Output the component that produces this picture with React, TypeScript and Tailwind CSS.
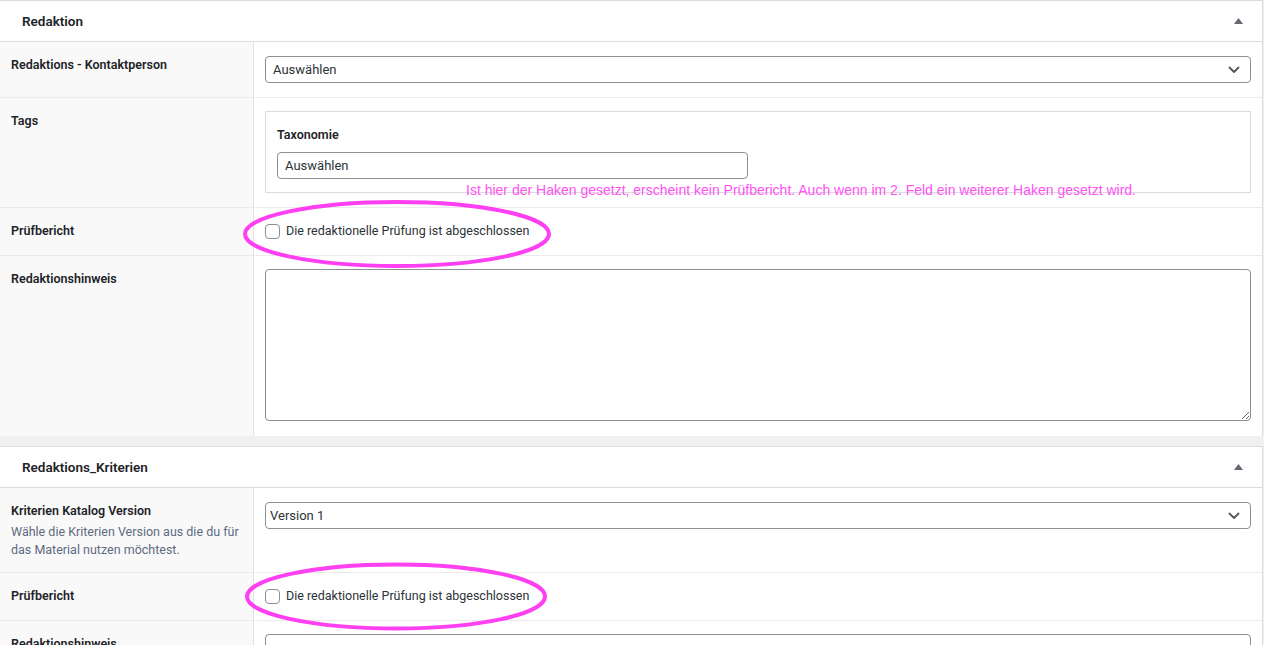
import React from "react";

const font = { fontFamily: "Roboto, 'Liberation Sans', sans-serif" };

function Chevron() {
  return (
    <svg width="12" height="8" viewBox="0 0 12 8" className="shrink-0">
      <path d="M1.5 1.5 L6 6 L10.5 1.5" fill="none" stroke="#50575e" strokeWidth="1.8" strokeLinecap="round" strokeLinejoin="round" />
    </svg>
  );
}

function Select({ value, className = "" }: { value: string; className?: string }) {
  return (
    <div className={"flex h-[27px] items-center justify-between rounded-[4px] border border-[#8c8f94] bg-white pr-[10px] text-[13px] text-[#2c3338] " + className}>
      <span>{value}</span>
      <Chevron />
    </div>
  );
}

function Header({ title }: { title: string }) {
  return (
    <div className="flex h-[41px] items-center justify-between border-b border-[#dcdcde] pl-[22px] pr-[19px]">
      <span className="text-[13.5px] font-semibold text-[#1d2327]">{title}</span>
      <svg width="9" height="6" viewBox="0 0 9 6">
        <path d="M4.5 0 L9 6 L0 6 Z" fill="#646970" />
      </svg>
    </div>
  );
}

function Row({
  label,
  desc,
  children,
  first = false,
  cellClass = "py-[14px]",
}: {
  label: string;
  desc?: React.ReactNode;
  children: React.ReactNode;
  first?: boolean;
  cellClass?: string;
}) {
  return (
    <div className={"flex " + (first ? "" : "border-t border-[#ebebeb]")}>
      <div className="w-[254px] shrink-0 border-r border-[#e1e1e1] bg-[#f9f9f9] px-[11px] pb-[13px] pt-[14px]">
        <div className="text-[12.5px] font-semibold leading-[18px] text-[#1d2327]">{label}</div>
        {desc && <div className="mt-[3px] whitespace-nowrap text-[12.5px] leading-[18px] text-[#5d6b7f]">{desc}</div>}
      </div>
      <div className={"flex-1 px-[11px] " + cellClass}>{children}</div>
    </div>
  );
}

function Check() {
  return (
    <label className="flex h-[19px] items-center gap-[6px] text-[12.5px] text-[#2c3338]">
      <span className="h-[15px] w-[15px] rounded-[4px] border border-[#8c8f94] bg-white" />
      <span>Die redaktionelle Prüfung ist abgeschlossen</span>
    </label>
  );
}

export default function App() {
  return (
    <div className="relative min-h-[645px] w-[1264px] overflow-hidden bg-[#f0f0f1]" style={font}>
      <div className="w-[1263px] border-r border-t border-[#dcdcde] bg-white">
        <Header title="Redaktion" />
        <Row label="Redaktions - Kontaktperson" first>
          <Select value="Auswählen" className="pl-[7px]" />
        </Row>
        <Row label="Tags" cellClass="pt-[13px] pb-[14px]">
          <div className="border border-[#dcdcde] px-[11px] pb-[13px] pt-[14px]">
            <div className="text-[12.5px] font-semibold leading-[18px] text-[#1d2327]">Taxonomie</div>
            <div className="mt-[8px] flex h-[27px] w-[471px] items-center rounded-[4px] border border-[#8c8f94] bg-white pl-[7px] text-[13px] text-[#2c3338]">
              Auswählen
            </div>
          </div>
        </Row>
        <Row label="Prüfbericht">
          <Check />
        </Row>
        <Row label="Redaktionshinweis" cellClass="pt-[13px] pb-[15px]">
          <textarea className="block h-[152px] w-full rounded-[4px] border border-[#8c8f94] bg-white" />
        </Row>
      </div>
      <div className="h-[10px]" />
      <div className="w-[1263px] border-r border-t border-[#dcdcde] bg-white">
        <Header title="Redaktions_Kriterien" />
        <Row
          label="Kriterien Katalog Version"
          desc={
            <>
              Wähle die Kriterien Version aus die du für
              <br />
              das Material nutzen möchtest.
            </>
          }
          first
        >
          <Select value="Version 1" className="pl-[4px]" />
        </Row>
        <Row label="Prüfbericht">
          <Check />
        </Row>
        <Row label="Redaktionshinweis" cellClass="pt-[13px] pb-[15px]">
          <textarea className="block h-[152px] w-full rounded-[4px] border border-[#8c8f94] bg-white" />
        </Row>
      </div>

      <div
        className="pointer-events-none absolute left-[466px] top-[181px] whitespace-nowrap text-[14px] leading-[18px] text-[#ff52f2]"
        style={{ fontFamily: "'Liberation Sans', Arial, sans-serif" }}
      >
        Ist hier der Haken gesetzt, erscheint kein Prüfbericht. Auch wenn im 2. Feld ein weiterer Haken gesetzt wird.
      </div>
      <svg className="pointer-events-none absolute left-0 top-0" width="1264" height="645">
        <ellipse cx="397" cy="234" rx="152" ry="32" fill="none" stroke="#ff3ff2" strokeWidth="4" />
        <ellipse cx="396" cy="596.5" rx="149" ry="32" fill="none" stroke="#ff3ff2" strokeWidth="4" />
      </svg>
    </div>
  );
}
